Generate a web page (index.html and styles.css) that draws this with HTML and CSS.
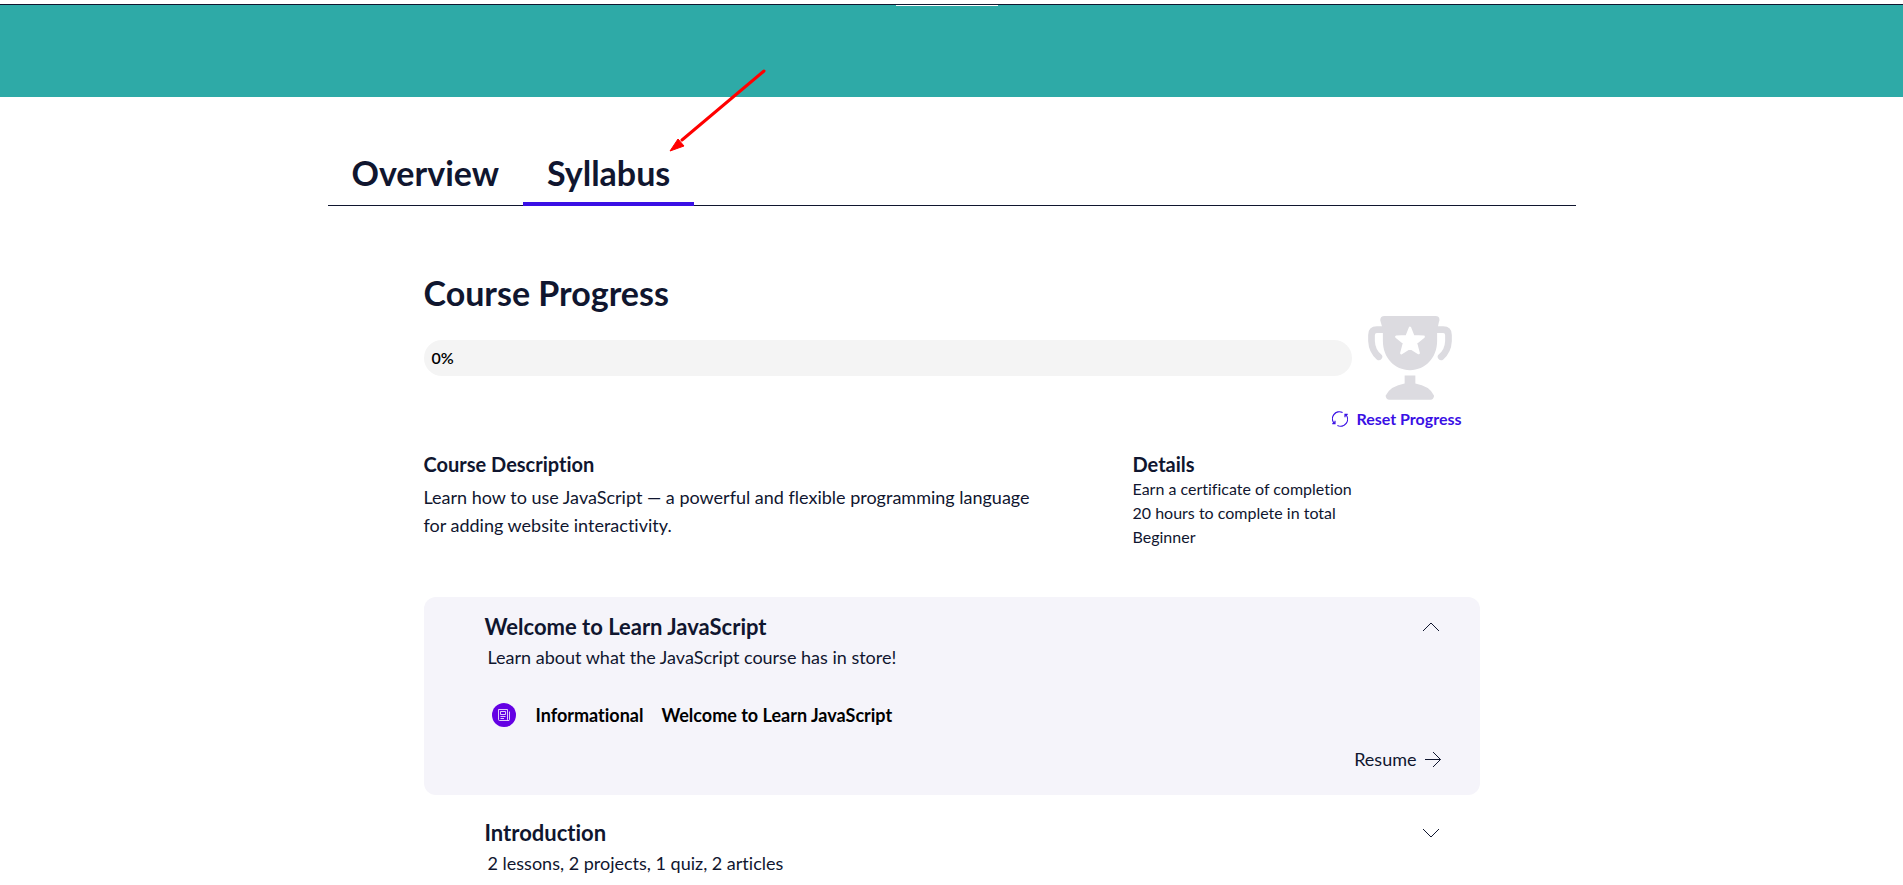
FILE: index.html
```html
<!DOCTYPE html>
<html lang="en">
<head>
<meta charset="utf-8">
<title>Learn JavaScript – Syllabus</title>
<link rel="stylesheet" href="styles.css">
</head>
<body>
<header class="banner"><div class="banner-notch"></div></header>
<main class="page">
  <nav class="tabs">
    <a class="tab" href="#overview">Overview</a>
    <a class="tab tab-active" href="#syllabus" aria-current="page">Syllabus</a>
    <svg class="pointer" viewBox="0 0 98 84" width="98" height="84" aria-hidden="true">
      <path d="M95 3 13 72" stroke="#f00" stroke-width="3" stroke-linecap="round"/>
      <path d="M1 83 9 71 15 78Z" fill="#f00" stroke="#f00" stroke-linejoin="round"/>
    </svg>
  </nav>
  <div class="content">
    <section class="progress">
      <h2 class="progress-title">Course Progress</h2>
      <div class="progress-row">
        <div class="progress-bar">0%</div>
        <svg class="trophy" viewBox="177 47 250 251" width="84" height="84" aria-hidden="true">
          <g fill="#dcdbe0">
            <path d="M213 60Q213 47 226 47H378Q391 47 390 60Q386 72 383 98V122C383 172 348 209 302 209S221 172 221 122V98Q219 76 213 60Z"/>
            <path d="M286 225H318V249Q360 256 374 285Q372 297 364 297H240Q231 297 229 285Q244 256 286 249Z"/>
          </g>
          <path d="M222 88H203Q187 88 187 104V122C188 143 196 158 209 169M382 88H401Q417 88 417 104V122C416 143 408 158 395 169" fill="none" stroke="#dcdbe0" stroke-width="20" stroke-linecap="round"/>
          <path d="M302 82 312 107 343 109 320 128 328 158 302 142 276 158 284 128 261 109 292 107Z" fill="#fff" stroke="#fff" stroke-width="7" stroke-linejoin="round"/>
        </svg>
      </div>
      <button class="reset" type="button">
        <svg viewBox="0 0 16 16" width="16" height="16" fill="none" stroke="currentColor" stroke-width="1.2" aria-hidden="true">
          <path d="M2.4 12.6A7 7 0 0 1 10.6 1.5M13.6 3.4A7 7 0 0 1 5.4 14.5M.3 12.6H3V9.8M15.7 3.4H13V6.2"/>
        </svg>
        Reset Progress
      </button>
    </section>
    <section class="about">
      <div class="description">
        <h3 class="about-title">Course Description</h3>
        <p class="description-text">Learn how to use JavaScript — a powerful and flexible programming language for adding website interactivity.</p>
      </div>
      <div class="details">
        <h3 class="about-title">Details</h3>
        <ul class="details-list">
          <li>Earn a certificate of completion</li>
          <li>20 hours to complete in total</li>
          <li>Beginner</li>
        </ul>
      </div>
    </section>
    <section class="modules">
      <article class="module module-open">
        <div class="module-head">
          <h3 class="module-title">Welcome to Learn JavaScript</h3>
          <button class="toggle" type="button" aria-label="Collapse">
            <svg viewBox="0 0 18 10" width="18" height="10" fill="none" stroke="currentColor"><path d="M1 9 9 1 17 9"/></svg>
          </button>
        </div>
        <p class="module-text">Learn about what the JavaScript course has in store!</p>
        <a class="lesson" href="#lesson">
          <span class="lesson-icon">
            <svg viewBox="0 0 12 12" width="12" height="12" fill="none" stroke="#fff" stroke-width=".8" aria-hidden="true"><path d="M10.5 11.5H1.5Q.5 11.5.5 10.5V.5H9.5V10.5Q9.5 11.5 10.5 11.5T11.5 10.5V2.5M2.5 2.5H7.5V5.5H2.5ZM2.5 7.5H7.5M2.5 9.5H6"/></svg>
          </span>
          <span class="lesson-kind">Informational</span>
          <span>Welcome to Learn JavaScript</span>
        </a>
        <a class="resume" href="#resume">Resume
          <svg viewBox="0 0 18 16" width="18" height="16" fill="none" stroke="currentColor" aria-hidden="true"><path d="M1 8.5H16.5M9 1 16.5 8.5 9 16"/></svg>
        </a>
      </article>
      <article class="module">
        <div class="module-head">
          <h3 class="module-title">Introduction</h3>
          <button class="toggle" type="button" aria-label="Expand">
            <svg viewBox="0 0 18 10" width="18" height="10" fill="none" stroke="currentColor"><path d="M1 1 9 9 17 1"/></svg>
          </button>
        </div>
        <p class="module-text">2 lessons, 2 projects, 1 quiz, 2 articles</p>
      </article>
    </section>
  </div>
</main>
</body>
</html>
```

FILE: styles.css
```css
* { box-sizing: border-box; }
body {
  margin: 0;
  padding-top: 4px;
  background: #fff;
  color: #10162f;
  font-family: Lato, "Liberation Sans", sans-serif;
  font-size: 18px;
  font-variant-ligatures: none;
}
h2, h3, p, ul { margin: 0; padding: 0; }
a { color: inherit; text-decoration: none; }
button { border: 0; padding: 0; background: none; font: inherit; color: inherit; cursor: pointer; }
svg { display: block; flex: none; }

.banner { height: 93px; padding-right: 9px; border-top: 1px solid #10162f; background: #2eaaa7; }
.banner-notch { width: 102px; height: 1px; margin: 0 auto; background: #fff; }

.page { max-width: 1248px; margin: 0 auto; }
.tabs {
  position: relative;
  display: flex;
  margin-top: 48px;
  border-bottom: 1px solid #10162f;
}
.tab {
  height: 60px;
  padding: 0 24px;
  font-size: 34px;
  font-weight: 700;
  line-height: 56px;
}
.tab-active { margin-bottom: -1px; height: 61px; border-bottom: 4px solid #3a10e5; }
.pointer { position: absolute; left: 341px; top: -77px; }

.content { padding: 64px 96px 0; }
.progress-title { font-size: 34px; font-weight: 700; line-height: 46px; }
.progress-row { display: flex; align-items: center; gap: 16px; padding-right: 28px; }
.progress-bar {
  flex: 1;
  height: 36px;
  padding: 0 8px;
  border-radius: 18px;
  background: #f4f4f4;
  color: #000;
  font-size: 16px;
  font-weight: 600;
  line-height: 36px;
}
.reset {
  display: flex;
  align-items: center;
  gap: 8px;
  margin: 7px 18px 0 auto;
  color: #3a10e5;
  font-size: 16px;
  font-weight: 700;
  line-height: 24px;
}

.about { display: flex; justify-content: space-between; margin-top: 20px; }
.description { width: 620px; }
.details { width: 347px; }
.about-title { font-size: 20px; font-weight: 700; line-height: 26px; }
.description-text { margin-top: 6px; line-height: 28px; }
.details-list { list-style: none; font-size: 16px; line-height: 24px; }

.modules { display: grid; gap: 8px; margin-top: 48px; }
.module { padding: 16px 38px 22px 61px; border-radius: 12px; }
.module-open { background: #f5f4fa; }
.module-head { display: flex; justify-content: space-between; align-items: center; }
.module-title { font-size: 22px; font-weight: 700; line-height: 28px; }
.toggle { padding: 4px 2px; }
.module-text { margin-top: 2px; padding-left: 3px; line-height: 28px; }
.lesson {
  display: flex;
  align-items: center;
  margin: 30px 0 0 7px;
  color: #000;
  font-weight: 700;
  line-height: 28px;
}
.lesson-icon {
  display: grid;
  place-items: center;
  width: 24px;
  height: 24px;
  margin-right: 20px;
  border-radius: 50%;
  background: #6400e4;
}
.lesson-kind { margin-right: 18px; }
.resume {
  display: flex;
  align-items: center;
  gap: 7px;
  width: fit-content;
  margin: 16px 0 0 auto;
  line-height: 28px;
}
```
